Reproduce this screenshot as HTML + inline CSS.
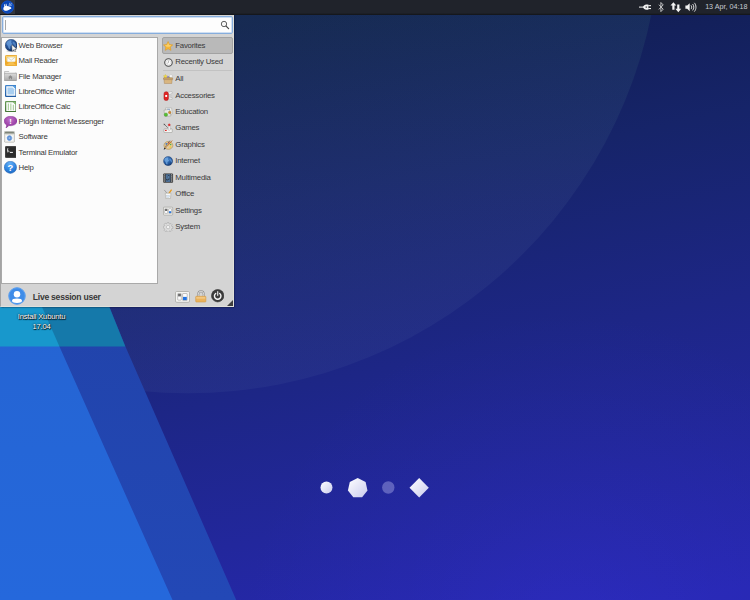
<!DOCTYPE html>
<html>
<head>
<meta charset="utf-8">
<title>Xubuntu Desktop</title>
<style>
html,body{margin:0;padding:0;}
body{width:750px;height:600px;overflow:hidden;position:relative;background:#1b2380;font-family:"Liberation Sans",sans-serif;}
#bg{position:absolute;left:0;top:0;width:750px;height:600px;display:block;}
#panel{position:absolute;left:0;top:0;width:750px;height:14.6px;z-index:5;background:linear-gradient(#20232b 0,#20232b 13px,#15171c 14.4px);}
#panel .mbtn{position:absolute;left:0;top:0;width:15px;height:13.6px;background:#33363e;}
#panel .clock{position:absolute;right:2.5px;top:0;height:14px;line-height:14.5px;font-size:7.2px;color:#c8ccd4;white-space:nowrap;}
#panel svg.ic{position:absolute;top:0;}
#menu{position:absolute;left:0;top:14px;width:234px;height:293.4px;background:#d4d4d4;box-sizing:border-box;border-right:1px solid #e0e0da;border-bottom:1px solid #e0e0da;border-left:1px solid #a4a4a4;box-shadow:.5px .5px 1.5px rgba(0,0,30,.75);}
#search{position:absolute;left:1px;top:2px;width:230.8px;height:18px;box-sizing:border-box;border:1px solid #86addc;border-radius:2px;background:#fdfdfd;box-shadow:inset 0 0 0 .7px #c0d5ef;}
#search .caret{position:absolute;left:1.6px;top:3px;width:1.6px;height:9.6px;background:#a6a6a6;}
#search svg{position:absolute;right:1.5px;top:3.3px;}
#list{position:absolute;left:0px;top:23px;width:157.4px;height:247.3px;background:#fcfcfc;border:1px solid #a9a9a9;box-sizing:border-box;}
.it{position:absolute;left:0;height:15.2px;width:150px;font-size:7.8px;letter-spacing:-.03em;color:#383838;line-height:15.2px;white-space:nowrap;}
.it span{position:absolute;left:16.6px;top:0;}
#list>svg{position:absolute;}
#cats{position:absolute;left:161px;top:23px;width:71px;}
.ct{position:absolute;left:0;width:71px;height:16.4px;font-size:7.8px;letter-spacing:-.03em;color:#3a3a3a;line-height:16.4px;white-space:nowrap;box-sizing:border-box;}
.ct span{position:absolute;left:13.3px;top:0;}
.ct svg{position:absolute;left:1.4px;top:3.1px;width:10.2px;height:10.2px;}
.ct.sel{background:#b9b9b9;border:1px solid #a2a2a2;border-radius:2px;top:0 !important;height:17px;}
.ct.sel span{left:12.3px;top:-.5px;}
.ct.sel svg{left:.4px;top:2.6px;}
#sep{position:absolute;left:1px;top:33px;width:69px;height:1px;background:#c2c2c2;}
#user{position:absolute;left:31.8px;top:274px;height:18px;line-height:18px;font-size:8.6px;letter-spacing:-.03em;font-weight:bold;color:#383838;white-space:nowrap;}
#menu svg.abs{position:absolute;}
#dlabel{position:absolute;left:1px;top:312px;width:81px;text-align:center;font-size:7.6px;letter-spacing:-.025em;line-height:9.6px;color:#fff;text-shadow:.6px .6px .8px rgba(0,0,0,.95),0 0 1.2px rgba(0,0,0,.8),0 0 2px rgba(0,0,0,.5);}
</style>
</head>
<body>
<svg id="bg" viewBox="0 0 750 600" width="750" height="600">
  <defs>
    <linearGradient id="g0" gradientUnits="userSpaceOnUse" x1="300" y1="14" x2="430" y2="651">
      <stop offset="0" stop-color="#101c4d"/>
      <stop offset="0.28" stop-color="#162469"/>
      <stop offset="0.56" stop-color="#1d2686"/>
      <stop offset="1" stop-color="#2728b2"/>
    </linearGradient>
    <radialGradient id="gr" gradientUnits="userSpaceOnUse" cx="570" cy="640" r="330">
      <stop offset="0" stop-color="rgb(70,60,255)" stop-opacity="0.15"/>
      <stop offset="0.45" stop-color="rgb(70,60,255)" stop-opacity="0.07"/>
      <stop offset="1" stop-color="rgb(70,60,255)" stop-opacity="0"/>
    </radialGradient>
    <linearGradient id="gc" gradientUnits="userSpaceOnUse" x1="0" y1="14" x2="0" y2="392">
      <stop offset="0" stop-color="rgb(100,215,150)"/>
      <stop offset="0.5" stop-color="rgb(130,160,185)"/>
      <stop offset="1" stop-color="rgb(118,145,185)"/>
    </linearGradient>
    <linearGradient id="gl" x1="0" y1="0" x2="0" y2="1">
      <stop offset="0" stop-color="#2560c8"/>
      <stop offset="1" stop-color="#2568dc"/>
    </linearGradient>
    <linearGradient id="gm" x1="0" y1="0" x2="0" y2="1">
      <stop offset="0" stop-color="#1f3f9f"/>
      <stop offset="1" stop-color="#2348b6"/>
    </linearGradient>
    <linearGradient id="sh" x1="0" y1="0" x2="1" y2="1">
      <stop offset="0" stop-color="#ffffff"/>
      <stop offset="1" stop-color="#c9cbee"/>
    </linearGradient>
  </defs>
  <rect width="750" height="600" fill="url(#g0)"/>
  <rect width="750" height="600" fill="url(#gr)"/>
  <circle cx="187.4" cy="-80.3" r="473.6" fill="url(#gc)" fill-opacity="0.08"/>
  <!-- mid band -->
  <polygon points="-40,0 -23,0 109,306 125.3,346.3 236.2,600 -40,600" fill="url(#gm)"/>
  <!-- light band -->
  <polygon points="-140,0 -95.2,0 59.3,346.3 172.5,600 -140,600" fill="url(#gl)"/>
  <!-- cyan strip -->
  <polygon points="0,300 106.5,300 125.3,346.5 59.4,346.5" fill="#1579aa"/>
  <polygon points="0,300 39,300 59.4,346.5 0,346.5" fill="#1898cc"/>
  <!-- shapes -->
  <circle cx="326.5" cy="487.5" r="6" fill="url(#sh)"/>
  <polygon points="357.7,478.1 365.6,481.9 367.5,490.4 362.1,497.3 353.3,497.3 347.9,490.4 349.8,481.9" fill="url(#sh)"/>
  <circle cx="388.3" cy="487.5" r="6.2" fill="#8f92d8" fill-opacity="0.55"/>
  <polygon points="419.2,478 428.8,487.8 419.2,497.5 409.5,487.8" fill="url(#sh)"/>
</svg>

<div id="panel">
  <div class="mbtn">
    <svg viewBox="0 0 15 14" width="15" height="14" style="position:absolute;left:0;top:0">
      <circle cx="7.600" cy="7" r="6.500" fill="#0b47b6"/>
      <circle cx="7.600" cy="7" r="6.100" fill="none" stroke="#1a59cc" stroke-width=".6"/>
      <path transform="translate(0 .5)" d="M3.300 8.300c0-1 .4-1.700 1-2.200l-.2-2c0-.5.700-.6.800-.1l.4 1.500.5-.1-.1-1.600c0-.5.700-.6.800-.1l.4 1.700c1.200 0 2.500.4 3.600 1.100.7.500 1 .9.900 1.300-.1.500-1 .8-1.800 1.100-1.300.6-2.700 1.300-4.300 1.300-1.300 0-2-.8-2-1.900z" fill="#fff"/>
      <path d="M9 5.400l.700-2.300M9.700 5.300l1.700-2M10.300 5.800l1.500-.8" fill="none" stroke="#cfe0fa" stroke-width=".6" stroke-linecap="round"/>
    </svg>
  </div>
  <!-- power plug -->
  <svg class="ic" style="left:638px" width="14" height="14" viewBox="0 0 14 14"><g fill="#f2f2f2"><rect x="1" y="6.600" width="5" height="1"/><path d="M5 7.100c.6-1.700 1.700-2.700 3.300-2.700h2.100v5.400H8.300c-1.600 0-2.700-1-3.300-2.700z"/><rect x="10.200" y="5.100" width="2.800" height="1.100"/><rect x="10.200" y="8" width="2.800" height="1.100"/></g><circle cx="8.300" cy="7.100" r=".9" fill="#20232b" opacity=".7"/></svg>
  <!-- bluetooth -->
  <svg class="ic" style="left:653.700px" width="14" height="14" viewBox="0 0 14 14"><path d="M4.900 4.700l4.300 4.500-2.300 2.400V2.500l2.300 2.400-4.300 4.500" fill="none" stroke="#d4d4d4" stroke-width=".9"/></svg>
  <!-- network -->
  <svg class="ic" style="left:668.500px" width="14" height="14" viewBox="0 0 14 14"><g fill="#f4f4f4"><path d="M4.400 2.200l2.900 3.400H5.500v4.200H3.300V5.600H1.500z"/><path d="M9.300 12.200L6.400 8.800h1.800V4.600h2.200v4.200h1.800z"/></g></svg>
  <!-- volume -->
  <svg class="ic" style="left:684px" width="14" height="14" viewBox="0 0 14 14"><path d="M1.400 5.600h1.800L5.700 3.200v8L3.200 8.800H1.400z" fill="#f2f2f2"/><g fill="none" stroke="#f2f2f2" stroke-width=".9"><path d="M7 5.300c.9.900.9 2.900 0 3.800"/><path d="M8.600 4c1.600 1.600 1.600 4.800 0 6.400"/><path d="M10.300 2.800c2.200 2.300 2.200 6.500 0 8.800"/></g></svg>
  <div class="clock">13 Apr, 04:18</div>
</div>

<div id="menu">
  <div id="search"><div class="caret"></div>
    <svg width="10" height="10" viewBox="0 0 10 10"><circle cx="4" cy="4" r="2.700" fill="#f6f6f6" stroke="#5a5a5a" stroke-width=".95"/><path d="M6.100 6.100l2.500 2.500" stroke="#4a4a4a" stroke-width="1.250" stroke-linecap="round"/></svg>
  </div>
  <div id="list">
<div class="it" style="top:0px"><span>Web Browser</span></div>
<div class="it" style="top:15.2px"><span>Mail Reader</span></div>
<div class="it" style="top:31px"><span>File Manager</span></div>
<div class="it" style="top:45.6px"><span>LibreOffice Writer</span></div>
<div class="it" style="top:60.8px"><span>LibreOffice Calc</span></div>
<div class="it" style="top:76px"><span>Pidgin Internet Messenger</span></div>
<div class="it" style="top:91.2px"><span>Software</span></div>
<div class="it" style="top:107px"><span>Terminal Emulator</span></div>
<div class="it" style="top:121.6px"><span>Help</span></div>
<svg viewBox="0.45 0.15 22.7 23.65" preserveAspectRatio="none" style="left:2.8px;top:1px;width:12.4px;height:13px"><defs><radialGradient id="wg" cx=".38" cy=".3" r=".8"><stop offset="0" stop-color="#4a7fc4"/><stop offset=".55" stop-color="#234f92"/><stop offset="1" stop-color="#122a55"/></radialGradient></defs>
<ellipse cx="12" cy="22.300" rx="9" ry="1.500" fill="#000" opacity=".15"/>
<circle cx="11.800" cy="11.500" r="11" fill="url(#wg)" stroke="#142c58" stroke-width=".7"/>
<path d="M6 4c2-1.500 5-2 6-1s-1 2.500-.5 4 2.500 1 2 3-3 1.500-3.500 3.500 1 4-.5 5-3-2.500-3.500-5S2.500 10 3 8s1.500-3 3-4z" fill="#6fa3de" opacity=".7"/>
<path d="M16 5c1.500.2 3.500 2 4.500 4.500s.3 5-.8 5-1.500-2-2.500-3.500-2.500-2-2.500-3.500.3-2.700 1.300-2.500z" fill="#6fa3de" opacity=".55"/>
<path d="M12.800 10.500l9.400 7.800-4 .4 2.300 4-1.800 1-2.200-4-3 2.700z" fill="#f6f6f6" stroke="#4a4a4a" stroke-width=".8" stroke-linejoin="round"/></svg>
<svg viewBox="0.2 1.2 23.6 21.6" preserveAspectRatio="none" style="left:2.5px;top:17px;width:12.4px;height:11.1px"><defs><linearGradient id="mg" x1="0" y1="0" x2="0" y2="1"><stop offset="0" stop-color="#fbd77a"/><stop offset="1" stop-color="#f3b43a"/></linearGradient></defs>
<rect x="1" y="2" width="22" height="20" rx="2" fill="url(#mg)" stroke="#e29a14" stroke-width="1.600"/>
<rect x="4.500" y="5.500" width="15" height="9" fill="#fbfbf6" stroke="#d8cfae" stroke-width=".6"/>
<path d="M4.500 5.500l7.500 6 7.500-6" fill="none" stroke="#b9b39c" stroke-width="1"/>
<path d="M1.800 12.500l5 3.500h10.400l5-3.500V20.500H1.800z" fill="#f0a928"/>
<path d="M1.800 21l8-5.500h4.400l8 5.500z" fill="#f7c050"/></svg>
<svg viewBox="0.35 2.6 23.3 19.85" preserveAspectRatio="none" style="left:2.3px;top:33.2px;width:12.8px;height:10.2px"><defs><linearGradient id="fg" x1="0" y1="0" x2="0" y2="1"><stop offset="0" stop-color="#d9d9d9"/><stop offset="1" stop-color="#a9a9a9"/></linearGradient></defs>
<path d="M1 4.500c0-.8.600-1.500 1.500-1.500h6l2 2.500h11c.8 0 1.500.6 1.500 1.500V9H1z" fill="#c9c9c9" stroke="#9a9a9a" stroke-width=".8"/>
<rect x="2.500" y="5" width="19" height="5" fill="#f4f4f4"/>
<rect x=".8" y="7.500" width="22.400" height="14.500" rx="1.300" fill="url(#fg)" stroke="#8f8f8f" stroke-width=".9"/>
<path d="M12 11l-4.200 3.800h1.300V18.500h2V16h1.800v2.500h2V14.800h1.300z" fill="#8a8a8a"/></svg>
<svg viewBox="1 1.5 22 22" preserveAspectRatio="none" style="left:2.7px;top:47.1px;width:11.7px;height:12px"><defs><linearGradient id="wrg" x1="0" y1="0" x2="0" y2="1"><stop offset="0" stop-color="#3f84cc"/><stop offset="1" stop-color="#1f5aa2"/></linearGradient></defs>
<rect x="1" y="1.500" width="22" height="22" rx="2.200" fill="url(#wrg)"/>
<path d="M3.400 3.900H16l4.600 4.600V21.100H3.400z" fill="#fdfdfd"/>
<path d="M16 3.900l4.600 4.600V3.900z" fill="#63b0f0"/>
<path d="M5.600 6H15.200l3.200 3.200V19H5.600z" fill="#a9cef0"/></svg>
<svg viewBox="1 1.5 22 22" preserveAspectRatio="none" style="left:2.7px;top:63.1px;width:11.7px;height:11.2px"><defs><linearGradient id="clg" x1="0" y1="0" x2="0" y2="1"><stop offset="0" stop-color="#6a9c58"/><stop offset="1" stop-color="#437534"/></linearGradient></defs>
<rect x="1" y="1.500" width="22" height="22" rx="2.200" fill="url(#clg)"/>
<path d="M3.400 3.900H16l4.600 4.600V21.100H3.400z" fill="#fdfdfd"/>
<path d="M16 3.900l4.600 4.600V3.900z" fill="#9fd08a"/>
<g stroke="#a6cc96" stroke-width="2"><path d="M7.300 6.500v13M12 6.500v13M16.700 9v10.500"/></g></svg>
<svg viewBox="0.25 1.65 23.5 21.35" preserveAspectRatio="none" style="left:1.9px;top:77.9px;width:13.3px;height:12.1px"><defs><radialGradient id="pg" cx=".45" cy=".3" r=".75"><stop offset="0" stop-color="#bf72c8"/><stop offset=".7" stop-color="#9a3fa6"/><stop offset="1" stop-color="#86309a"/></radialGradient></defs>
<path d="M12 2c6.300 0 11.400 3.600 11.400 8.400S18.300 18.800 12 18.800c-1.300 0-2.500-.15-3.600-.4C7.200 20.600 5.200 22.300 3.600 22.800c.8-1.700 1.300-3.500 1.200-5.200C2.200 16 .6 13.500.6 10.400.6 5.600 5.700 2 12 2z" fill="url(#pg)" stroke="#7a2788" stroke-width=".7"/>
<text x="11.800" y="15.300" font-family="Liberation Sans, sans-serif" font-weight="bold" font-size="13.500" text-anchor="middle" fill="#fff">!</text></svg>
<svg viewBox="0.9 0.9 22.2 22.2" preserveAspectRatio="none" style="left:2.4px;top:93.4px;width:10.9px;height:11.5px">
<rect x="1.500" y="1.500" width="21" height="21" rx="2.200" fill="#f1f1ee" stroke="#a4a49c" stroke-width="1.200"/>
<path d="M2.200 5.200c0-2 1-3 2.600-3h14.400c1.600 0 2.600 1 2.600 3v.9H2.200z" fill="#7e8478"/>
<rect x="2.200" y="6" width="19.600" height="1.600" fill="#c9c9c2"/>
<rect x="4" y="9" width="16" height="11.500" rx="1" fill="#fbfbfa" stroke="#d4d4cd" stroke-width=".6"/>
<circle cx="12" cy="14.600" r="5" fill="#5c90d6"/>
<circle cx="12" cy="14.600" r="5" fill="none" stroke="#7fa9e2" stroke-width="1.500" stroke-dasharray="1.700 1.450"/>
<rect x="10.400" y="13" width="3.200" height="3.200" fill="#9dbdea"/></svg>
<svg viewBox="0.6 0.6 22.8 22.8" preserveAspectRatio="none" style="left:2.7px;top:108.1px;width:11.7px;height:12px">
<rect x="1" y="1" width="22" height="22" rx="2.500" fill="#2b2b2b" stroke="#1a1a1a" stroke-width=".8"/>
<rect x="2.300" y="2.300" width="19.400" height="19.400" rx="1.700" fill="none" stroke="#474747" stroke-width=".8"/>
<path d="M4.600 5.500h2.600v1.200H5.900v1.700h1.300v4H4.600v-1.200h1.300V9.600H4.600z" fill="#f4f4f4"/>
<path d="M7.600 10.300l2.200 2.200" stroke="#e8e8e8" stroke-width="1.200"/>
<rect x="10.200" y="11.800" width="5.800" height="1.900" fill="#f4f4f4"/></svg>
<svg viewBox="0.4 0.4 23.2 23.2" preserveAspectRatio="none" style="left:2.1px;top:123.1px;width:12.8px;height:12.6px"><defs><radialGradient id="hg" cx=".45" cy=".2" r=".9"><stop offset="0" stop-color="#63aef6"/><stop offset=".55" stop-color="#2f86e2"/><stop offset="1" stop-color="#1a62bc"/></radialGradient></defs>
<circle cx="12" cy="12" r="11.200" fill="url(#hg)" stroke="#1c5aa8" stroke-width=".8"/>
<text x="12" y="18" font-family="Liberation Sans, sans-serif" font-weight="bold" font-size="17" text-anchor="middle" fill="#fff">?</text></svg>

</div>
  <div id="cats">
<div class="ct sel" style="top:0.5px"><svg viewBox="0 0 16 16"><path d="M8 .8l2.200 4.700 5.100.6-3.800 3.500 1 5.100L8 12.200l-4.500 2.500 1-5.100L.7 6.100l5.100-.6z" fill="#f6b738" stroke="#e09a22" stroke-width=".9" stroke-linejoin="round"/><path d="M8 2.800l1.500 3.400 3.500.4-2.600 2.300H5.600L3 6.600l3.500-.4z" fill="#fbd878" opacity=".75"/></svg><span>Favorites</span></div>
<div class="ct" style="top:16.9px"><svg viewBox="0 0 16 16"><circle cx="8.600" cy="8.600" r="5.900" fill="#fafafa" stroke="#4a4a4a" stroke-width="1.700"/><circle cx="8.600" cy="8.600" r="3.900" fill="none" stroke="#c4c4c4" stroke-width=".7"/><path d="M8.600 5.600V8.800l-1.900 1.100" fill="none" stroke="#8a8a8a" stroke-width=".9"/></svg><span>Recently Used</span></div>
<div class="ct" style="top:33.7px"><svg viewBox="0 0 16 16"><path d="M3.800.6l1 2 2.200.3-1.600 1.500.4 2.200-2-1.100-2 1.100.4-2.200L.6 2.900l2.200-.3z" fill="#f2dc3c" stroke="#c9a91a" stroke-width=".4"/><path d="M6 6.500l.8-2.800h2.600l.8 2.800z" fill="#8f7fc0"/><circle cx="8" cy="4.800" r="1.500" fill="#9a86cc"/><path d="M8.500 6.500l1-2h3l.5 2z" fill="#7fb04a"/><rect x="10.600" y="1.200" width="3.600" height="4.600" rx=".5" fill="#fbfbfb" stroke="#b4b4b4" stroke-width=".5"/>
<rect x=".8" y="6" width="14.400" height="2.800" rx=".6" fill="#c9a26b" stroke="#9a7644" stroke-width=".6"/><path d="M1.600 8.800h12.800l-.6 6.200H2.200z" fill="#d9b680" stroke="#9a7644" stroke-width=".6"/></svg><span>All</span></div>
<div class="ct" style="top:50.8px"><svg viewBox="0 0 16 16"><path d="M7 2l7-1 .8 2.500L9 6z" fill="#f2f2f2" stroke="#999" stroke-width=".6"/><path d="M8 9l6.500 1.500-.5 3L8 12z" fill="#ececec" stroke="#999" stroke-width=".6"/><path d="M8.500 7.500l5-1 .3 1.500-5 1z" fill="#ddd" stroke="#aaa" stroke-width=".4"/>
<rect x="1.500" y="1" width="7" height="14" rx="3.400" fill="#e02424" stroke="#a81414" stroke-width=".7"/><rect x="3.500" y="6.300" width="3" height="3" fill="#fff"/></svg><span>Accessories</span></div>
<div class="ct" style="top:66.5px"><svg viewBox="0 0 16 16"><path d="M4 1.500h9.500l1 9.500-10 1z" fill="#f7f7f3" stroke="#9a9a94" stroke-width=".7"/><path d="M1.500 5l9-1.500 2 10.500-9.500 1z" fill="#e9e9e4" stroke="#8f8f8a" stroke-width=".7"/>
<circle cx="4.600" cy="12" r="2.700" fill="#55c030" stroke="#3f8f24" stroke-width=".6"/><circle cx="10.500" cy="8.500" r="2" fill="#d8892c" stroke="#8a5a1a" stroke-width=".5"/><path d="M6.500 3.200l4.500.5" stroke="#6a8fc9" stroke-width="1"/></svg><span>Education</span></div>
<div class="ct" style="top:82.9px"><svg viewBox="0 0 16 16"><path d="M1.500 1.500l6 6" stroke="#555" stroke-width="1.100"/><path d="M1 1l2.800.5L1.500 3.800z" fill="#555"/>
<rect x="1.500" y="9.300" width="13" height="5.700" rx="1" fill="#f4f4f2" stroke="#8d8d88" stroke-width=".8"/><rect x="8.400" y="4" width="2.800" height="7.500" rx=".6" fill="#fafafa" stroke="#999" stroke-width=".6"/><circle cx="9.800" cy="3" r="1.700" fill="#e33" stroke="#b22" stroke-width=".4"/><rect x="3.200" y="10.800" width="2.600" height="1.800" fill="#d22"/></svg><span>Games</span></div>
<div class="ct" style="top:100px"><svg viewBox="0 0 16 16"><ellipse cx="8.500" cy="8.500" rx="7" ry="6.200" fill="#e6c990" stroke="#a9823f" stroke-width=".8"/><circle cx="5.200" cy="6" r="1.400" fill="#3c78d8"/><circle cx="9" cy="4.500" r="1.300" fill="#e03c3c"/><circle cx="12" cy="7" r="1.300" fill="#4caf50"/><circle cx="11.500" cy="11" r="1.300" fill="#f2d024"/><ellipse cx="6.500" cy="10.500" rx="1.800" ry="1.400" fill="#d3d3d3"/>
<path d="M14.500.8L4 12.500" stroke="#c07a2a" stroke-width="1.500"/><path d="M1 15.200l1.300-3.300 2.200 2z" fill="#222"/><path d="M11 .8l-7.500 10" stroke="#5f5f5f" stroke-width="1"/></svg><span>Graphics</span></div>
<div class="ct" style="top:115.7px"><svg viewBox="0 0 16 16"><defs><radialGradient id="ng" cx=".38" cy=".3" r=".8"><stop offset="0" stop-color="#4a86cc"/><stop offset=".6" stop-color="#22589e"/><stop offset="1" stop-color="#142f60"/></radialGradient></defs><circle cx="8" cy="8" r="7.200" fill="url(#ng)" stroke="#18386a" stroke-width=".6"/>
<path d="M4 3c1.500-1 3.500-1 4.200-.3S7.500 4.500 8 5.500s1.800.7 1.400 2S7.200 8.600 7 10s.6 2.700-.4 3.300-2-1.600-2.300-3.300S1.800 7.200 2.200 5.700 3 3.600 4 3z" fill="#78aee6" opacity=".7"/><path d="M11 4c1 .2 2.300 1.400 2.900 3s.2 3.300-.5 3.300-1-1.300-1.600-2.300S10.100 6.700 10.100 5.700s.2-1.900.9-1.700z" fill="#78aee6" opacity=".55"/></svg><span>Internet</span></div>
<div class="ct" style="top:132.8px"><svg viewBox="0 0 16 16"><rect x=".8" y="1" width="14.400" height="14" rx="1" fill="#353535" stroke="#222" stroke-width=".6"/><g fill="#cfcfcf"><rect x="1.800" y="2.200" width="1.600" height="1.600"/><rect x="1.800" y="5.400" width="1.600" height="1.600"/><rect x="1.800" y="8.600" width="1.600" height="1.600"/><rect x="1.800" y="11.800" width="1.600" height="1.600"/><rect x="12.600" y="2.200" width="1.600" height="1.600"/><rect x="12.600" y="5.400" width="1.600" height="1.600"/><rect x="12.600" y="8.600" width="1.600" height="1.600"/><rect x="12.600" y="11.800" width="1.600" height="1.600"/></g>
<rect x="4.400" y="2" width="7.200" height="12" fill="#4d729c"/><path d="M7 3.500l3.500-.9v7.200a1.700 1.500 0 1 1-1-1.400V4.600L8 5.200v5.600a1.700 1.500 0 1 1-1-1.400z" fill="#1d2a3a" stroke="#8fc0f2" stroke-width=".35"/></svg><span>Multimedia</span></div>
<div class="ct" style="top:148.5px"><svg viewBox="0 0 16 16"><path d="M2 1.500l5 6" stroke="#888" stroke-width="1"/><path d="M13.500 1L8.500 8" stroke="#e89a1a" stroke-width="2"/><path d="M3.500 6.500h9l-.8 8.500H4.300z" fill="#f8f8f6" stroke="#a0a09a" stroke-width=".8"/><rect x="6" y="10" width="4" height="3" fill="#d6e4f4" stroke="#9ab" stroke-width=".4"/></svg><span>Office</span></div>
<div class="ct" style="top:165.6px"><svg viewBox="0 0 16 16"><rect x=".8" y="1.800" width="14.400" height="12.400" rx="1.200" fill="#f6f6f4" stroke="#96968f" stroke-width=".9"/><rect x="2.600" y="4.300" width="4.600" height="7.400" rx=".5" fill="#fff" stroke="#6f6f6f" stroke-width=".6"/><rect x="3.200" y="4.900" width="3.400" height="2.800" fill="#5c5c5c"/><rect x="8.800" y="4.300" width="4.600" height="7.400" rx=".5" fill="#fff" stroke="#6f6f6f" stroke-width=".6"/><rect x="9.400" y="8.200" width="3.400" height="2.900" fill="#2a78e0"/></svg><span>Settings</span></div>
<div class="ct" style="top:182px"><svg viewBox="0 0 16 16"><g fill="#dcdcdc" stroke="#9a9a9a" stroke-width=".75"><path d="M6.800 1h2.400l.4 1.800 1.300.6 1.600-1 1.700 1.700-1 1.600.6 1.300 1.800.4v2.400l-1.800.4-.6 1.300 1 1.600-1.700 1.700-1.600-1-1.300.6-.4 1.800H6.800l-.4-1.800-1.300-.6-1.600 1-1.700-1.700 1-1.600-.6-1.300L.4 9.200V6.800l1.800-.4.6-1.300-1-1.600 1.700-1.700 1.600 1 1.300-.6z"/></g><circle cx="8" cy="8" r="2.700" fill="#f2f2f2" stroke="#9c9c9c" stroke-width=".75"/></svg><span>System</span></div>
<div id="sep"></div>

</div>
  <svg class="abs" style="left:7px;top:273.100px" width="18" height="18" viewBox="0 0 36 36"><defs><clipPath id="uc"><circle cx="18" cy="18" r="15.500"/></clipPath></defs>
    <circle cx="18" cy="18" r="17.300" fill="#3f8ce8"/><circle cx="18" cy="18" r="16.400" fill="none" stroke="#75b0f4" stroke-width="1.200"/>
    <g clip-path="url(#uc)" fill="#fff"><circle cx="18" cy="14.400" r="6.500"/><ellipse cx="18" cy="27.400" rx="10" ry="4.400"/></g></svg>
  <div id="user">Live session user</div>
  <!-- settings -->
  <svg class="abs" style="left:174.300px;top:277px" width="15" height="12" viewBox="0 0 15 12"><rect x=".5" y=".5" width="14" height="10.800" rx="1.200" fill="#f4f4f2" stroke="#b0b0ac" stroke-width=".9"/><rect x="2.700" y="2.500" width="3.600" height="6.600" rx=".5" fill="#fdfdfd" stroke="#8a8a8a" stroke-width=".5"/><rect x="3.100" y="2.900" width="2.800" height="2.500" fill="#6a6a6a"/><rect x="7.600" y="2.500" width="4.600" height="7" rx=".5" fill="#fdfdfd" stroke="#8a8a8a" stroke-width=".5"/><rect x="8" y="5.900" width="3.800" height="3.200" fill="#1f72e2"/></svg>
  <!-- lock -->
  <svg class="abs" style="left:193.600px;top:276px" width="12" height="13" viewBox="0 0 12 13"><path d="M3.300 7V4.200a2.700 3 0 0 1 5.400 0V7" fill="none" stroke="#8e8e8e" stroke-width="2"/><path d="M3.300 7V4.200a2.700 3 0 0 1 5.400 0V7" fill="none" stroke="#d8d8d8" stroke-width="1"/><rect x=".7" y="6.300" width="10.200" height="5.700" rx=".7" fill="#eab25c" stroke="#d29a46" stroke-width=".6"/><rect x="1.300" y="6.900" width="9" height="1.800" fill="#f6d090" opacity=".7"/></svg>
  <!-- power -->
  <svg class="abs" style="left:210px;top:275.300px" width="13.400" height="13.400" viewBox="0 0 14 14"><circle cx="7" cy="7" r="6.500" fill="#3b3b3b" stroke="#2a2a2a" stroke-width=".6"/><path d="M4.900 4.700a3.400 3.400 0 1 0 4.200 0" fill="none" stroke="#f6f6f6" stroke-width="1.500" stroke-linecap="round"/><path d="M7 2.800v3.800" stroke="#dedede" stroke-width="1.300" stroke-linecap="round"/></svg>
  <!-- grip -->
  <svg class="abs" style="left:226px;top:285.700px" width="6" height="6" viewBox="0 0 6 6"><path d="M6 0V6H0z" fill="#3f3f3f"/></svg>
</div>

<div id="dlabel">Install Xubuntu<br>17.04</div>
</body>
</html>
